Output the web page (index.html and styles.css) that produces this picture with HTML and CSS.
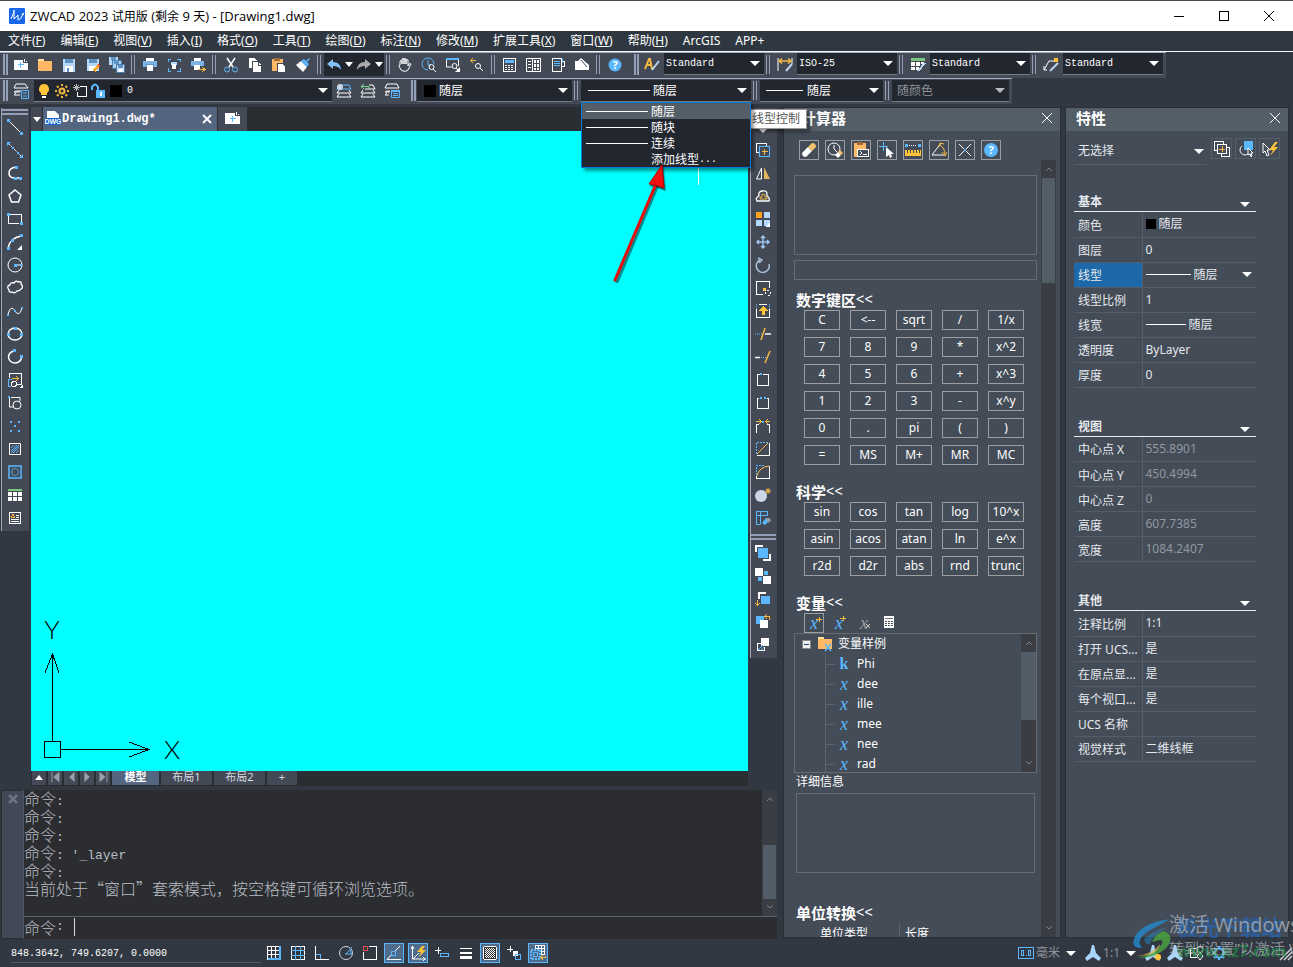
FILE: index.html
```html
<!DOCTYPE html>
<html lang="zh-CN">
<head>
<meta charset="utf-8">
<title>ZWCAD 2023</title>
<link rel="stylesheet" href="styles.css">
</head>
<body>
<div class="app">
<header class="titlebar">
  <svg class="logo" viewBox="0 0 16 16"><rect width="16" height="16" rx="1" fill="#1767e8"/><path d="M2 11 5 4v7l4-4v5q3 0 5-6" stroke="#fff" fill="none"/><circle cx="5" cy="3" r="1" fill="#fff"/><circle cx="14" cy="6" r="1" fill="#fff"/></svg>
  <h1>ZWCAD 2023 <span>试用版</span> (<span>剩余</span> 9 <span>天</span>) - [Drawing1.dwg]</h1>
  <button aria-label="最小化"><svg class="i k" viewBox="0 0 16 16"><path d="M3 8.500h10"/></svg></button>
  <button aria-label="最大化"><svg class="i k" viewBox="0 0 16 16"><path d="M3.500 3.500h9v9h-9z"/></svg></button>
  <button aria-label="关闭"><svg class="i k s" viewBox="0 0 16 16"><path d="M3 3l10 10M13 3 3 13"/></svg></button>
</header>
<nav class="menubar">
  <button>文件(<u>F</u>)</button><button>编辑(<u>E</u>)</button><button>视图(<u>V</u>)</button><button>插入(<u>I</u>)</button><button>格式(<u>O</u>)</button><button>工具(<u>T</u>)</button><button>绘图(<u>D</u>)</button><button>标注(<u>N</u>)</button><button>修改(<u>M</u>)</button><button>扩展工具(<u>X</u>)</button><button>窗口(<u>W</u>)</button><button>帮助(<u>H</u>)</button><button>ArcGIS</button><button>APP+</button>
</nav>

<div class="toolrow">
  <div class="bar">
    <span class="grip"></span>
    <button class="t" aria-label="新建"><svg class="i" viewBox="0 0 16 16"><path class="F" d="M1 3h9v3h5v7H1zM11 2h1v3h-1zM13 4h1v1h-1z"/><path class="b" d="M7.500 5v6M5 7.500h6"/></svg></button>
    <button class="t" aria-label="打开"><svg class="i" viewBox="0 0 16 16"><path fill="#ffe0a0" stroke="none" d="M1 2h6v3H1z"/><path fill="#ffb866" stroke="none" d="M1 4h14v10H1z"/></svg></button>
    <button class="t" aria-label="保存"><svg class="i" viewBox="0 0 16 16"><path class="L" d="M2 2h12v13H2z"/><path class="D" d="M4 2h8v4H4z"/><path class="F" d="M4 9h8v6H4z"/><path class="D" d="M6 11h2v4H6z"/></svg></button>
    <button class="t" aria-label="另存为"><svg class="i" viewBox="0 0 16 16"><path class="L" d="M2 2h12v12H2z"/><path class="D" d="M4 2h8v4H4z"/><path class="F" d="M4 9h8v5H4z"/><path stroke="#ffa82e" stroke-width="3" d="m9 14 5-6"/><path stroke="#e84b3c" stroke-width="2" d="m13 8 2 1"/></svg></button>
    <button class="t" aria-label="全部保存"><svg class="i" viewBox="0 0 16 16"><path class="L" d="M0 0h9v8H0z"/><path class="D" d="M2 0h5v3H2z"/><path fill="#a7d1f5" stroke="#4c7da9" d="M3.500 3.500h9v8h-9z"/><path class="D" d="M5 3h5v4H5z"/><path fill="#c6e4ff" stroke="#4c7da9" d="M7.500 7.500h8v8h-8z"/><path class="D" d="M9 8h5v3H9z"/><path class="F" d="M10 12h4v3h-4z"/></svg></button>
    <span class="sep"></span>
    <button class="t" aria-label="打印"><svg class="i" viewBox="0 0 16 16"><path class="F" d="M4 1h8v3H4z"/><path fill="#7db4e8" stroke="none" d="M1 4h14v6H1z"/><path class="D" d="M4 7h8v2H4z"/><path class="F" d="M5 8h6v6H5z"/></svg></button>
    <button class="t" aria-label="打印预览"><svg class="i" viewBox="0 0 16 16"><path class="b" d="M2 5V2h3M11 2h3v3M14 11v3h-3M5 14H2v-3"/><path class="L" d="M5 5h6v3H5z"/><path class="F" d="M6 7h4v5H6z"/></svg></button>
    <button class="t" aria-label="发布"><svg class="i" viewBox="0 0 16 16"><path class="F" d="M4 1h7v3H4z"/><path fill="#7db4e8" stroke="none" d="M1 4h13v5H1z"/><path class="F" d="M4 8h6v5H4z"/><path class="o" d="M8 12.500h7M12 10l3 2.500-3 2.500"/></svg></button>
    <span class="sep"></span>
    <button class="t" aria-label="剪切"><svg class="i s" viewBox="0 0 16 16"><path d="m4 1 6 9M12 1 6 10" stroke-width="1.500"/><circle class="b" cx="4" cy="12.500" r="2.500"/><circle class="b" cx="12" cy="12.500" r="2.500"/></svg></button>
    <button class="t" aria-label="复制"><svg class="i" viewBox="0 0 16 16"><path class="F" d="M2 1h5l3 3v7H2z"/><path fill="#fff" stroke="#434a56" d="M5.500 4.500h6l3 3v8h-9z"/><path stroke="#434a56" d="M11.500 5v3H15"/></svg></button>
    <button class="t" aria-label="粘贴"><svg class="i" viewBox="0 0 16 16"><path fill="#ffb866" stroke="none" d="M1 2h11v12H1z"/><path fill="#a46a35" stroke="none" d="M3 1h6v3H3z"/><path fill="#fff" stroke="#434a56" d="M6.500 6.500h5l3 3v6h-8z"/></svg></button>
    <button class="t" aria-label="特性匹配"><svg class="i s" viewBox="0 0 16 16"><path class="F" d="m1 8 5-4 6 6-4 5z"/><path class="B" d="m6 4 3-2 5 5-2 3zM11 4l3-3 1 1-3 3z"/></svg></button>
    <span class="sep"></span>
    <div class="undo">
      <button class="t" aria-label="放弃"><svg class="i s" viewBox="0 0 16 16"><path fill="#84bff5" stroke="none" d="M1 7l6-5v3c5 0 8 3 8 8-2-3-4-4-8-4v3z"/></svg></button><span class="tri"></span>
      <button class="t" aria-label="重做"><svg class="i s" viewBox="0 0 16 16"><path fill="#aaa" stroke="none" d="M15 7 9 2v3c-5 0-8 3-8 8 2-3 4-4 8-4v3z"/></svg></button><span class="tri"></span>
    </div>
    <span class="sep"></span>
    <button class="t" aria-label="平移"><svg class="i s" viewBox="0 0 16 16"><path d="M3 8V4q1-1 2 0v3-5q1-1 2 0v5-5q1-1 2 0v5-4q1-1 2 0v6l1-2q2-1 2 0l-3 6q-2 2-5 1-2 0-3-3L2 9q0-1 1-1"/></svg></button>
    <button class="t" aria-label="实时缩放"><svg class="i s" viewBox="0 0 16 16"><path class="b" d="M7 13a6 6 0 1 1 6-6M7 3v5h3"/><circle cx="10.500" cy="10" r="2.500"/><path d="m12 12 3 3"/></svg></button>
    <button class="t" aria-label="窗口缩放"><svg class="i s" viewBox="0 0 16 16"><path class="b" stroke-width="2" d="M1 2h13"/><path d="M1.500 3v7h5M13.500 3v6"/><circle cx="9.500" cy="9" r="2.500"/><path d="m11 11 2 2"/><path class="F" d="m15 10v5h-5z"/></svg></button>
    <button class="t" aria-label="上一个"><svg class="i s" viewBox="0 0 16 16"><path class="o" d="M2 3.500h5M4 1 1.500 3.500 4 6"/><circle cx="9" cy="9" r="2.500"/><path d="m11 11 3 3"/></svg></button>
    <span class="sep"></span>
    <button class="t" aria-label="特性"><svg class="i" viewBox="0 0 16 16"><path d="M1.500 1.500h12v13h-12z"/><path class="B" d="M3 3h9v3H3z"/><path stroke-dasharray="2 1" d="M3 8.500h9M3 10.500h9M3 12.500h9"/></svg></button>
    <button class="t" aria-label="设计中心"><svg class="i" viewBox="0 0 16 16"><path d="M.5 1.500h14v13H.5zM6.500 2v12"/><path d="M2 4.500h3M2 7.500h3M2 10.500h3"/><path d="M8.500 3.500h1v2h-1zM11.500 3.500h1v2h-1zM8.500 7.500h1v2h-1zM11.500 7.500h1v2h-1zM8.500 11.500h1v1h-1zM11.500 11.500h1v1h-1z"/></svg></button>
    <button class="t" aria-label="工具选项板"><svg class="i" viewBox="0 0 16 16"><path d="M2.500 1.500h9v13h-9zM12 4.500h2v5h-2"/><path class="b" d="M4 4.500h6M4 6.500h6M4 8.500h6M12 2v4"/></svg></button>
    <button class="t" aria-label="图纸集"><svg class="i s" viewBox="0 0 16 16"><path class="F" d="M1 4h3l3-3 8 7v5H1z"/><path stroke="#434a56" d="m7 3 6 7"/></svg></button>
    <span class="sep"></span>
    <button class="t" aria-label="帮助"><svg class="i s" viewBox="0 0 16 16"><circle cx="8" cy="8" r="6.500" class="B"/><text x="8" y="12" class="q">?</text></svg></button>
  </div>
  <div class="bar second">
    <span class="grip"></span>
    <button class="t" aria-label="文字样式"><svg class="i s" viewBox="0 0 16 16"><path class="o" stroke-width="2" d="M1 12 5 2h1l2 10M3 8h5"/><path stroke="#b9d3ee" stroke-width="2" d="m8 13 7-9"/></svg></button>
    <div class="combo styl"><select class="mono" aria-label="文字样式"><option>Standard</option></select></div>
    <span class="sep"></span>
    <button class="t" aria-label="标注样式"><svg class="i s" viewBox="0 0 16 16"><path d="M1 1v13M15 1v6"/><path class="o" stroke-width="1.500" d="M2 4h12M5 1.500 2 4l3 2.500M11 1.500 14 4l-3 2.500"/><path stroke="#b9d3ee" stroke-width="2" d="m9 14 6-7"/></svg></button>
    <div class="combo styl"><select class="mono" aria-label="标注样式"><option>ISO-25</option></select></div>
    <span class="sep"></span>
    <button class="t" aria-label="表格样式"><svg class="i" viewBox="0 0 16 16"><path class="G" d="M1 1h14v3H1z"/><path class="F" d="M1 5h4v4H1zM6 5h4v4H6zM11 5h3v2h-3zM1 10h4v3H1zM6 10h3v3H6z"/><path stroke="#b9d3ee" stroke-width="2" d="m8 14 7-8"/></svg></button>
    <div class="combo styl"><select class="mono" aria-label="表格样式"><option>Standard</option></select></div>
    <span class="sep"></span>
    <button class="t" aria-label="引线样式"><svg class="i s" viewBox="0 0 16 16"><path d="m1 13 5-9h6M1 9v4h3"/><path class="O" d="M11 1h4v4h-4z"/><path stroke="#b9d3ee" stroke-width="2" d="m7 14 8-8"/></svg></button>
    <div class="combo styl"><select class="mono" aria-label="引线样式"><option>Standard</option></select></div>
  </div>
</div>

<div class="toolrow lower">
  <div class="bar">
    <span class="grip"></span>
    <button class="t" aria-label="图层特性"><svg class="i s" viewBox="0 0 16 16"><path d="m1 5 2-4h9l3 4zM8 8H3L1 9h6M7 12H1l2-2"/><path fill="#434a56" class="b" d="M8.500 7.500h7v8h-7zM10 10h4M10 13h4"/></svg></button>
    <div class="combo layer">
      <svg class="i s" viewBox="0 0 16 16"><path class="O" d="M8 1a5 5 0 0 1 3 9v2H5v-2a5 5 0 0 1 3-9z"/><path stroke-width="2" d="M6 14h4"/></svg>
      <svg class="i s" viewBox="0 0 16 16"><circle class="o" cx="8" cy="8" r="2.500" stroke-width="2"/><path class="o" stroke-width="2" d="M8 1v2M8 13v2M1 8h2M13 8h2M3 3l1.500 1.500M11.500 11.500 13 13M13 3l-1.500 1.500M4.500 11.500 3 13"/></svg>
      <svg class="i" viewBox="0 0 16 16"><path d="M8 3.500h6v10H5.500V9"/><path stroke="#bbb" d="M4.500 1v7M1 4.500h7M2 2l5 5M7 2 2 7"/></svg>
      <svg class="i s" viewBox="0 0 16 16"><path class="b" stroke-width="2" d="M2 7V4q3-5 6 0v3"/><path class="B" d="M6 7h9v8H6z"/><path class="F" d="M10 9h2v4h-2z"/></svg>
      <span class="swatch"></span>
      <select class="mono" aria-label="图层"><option>0</option></select>
    </div>
    <button class="t" aria-label="置为当前"><svg class="i s" viewBox="0 0 16 16"><path class="b" d="m1 6 2-4h10l2 4z"/><circle cx="4" cy="4" r="3" fill="#cdd8e6" stroke="none"/><path d="m3 7-2 3h14l-2-3M3 11l-2 3h14l-2-3"/></svg></button>
    <button class="t" aria-label="上一图层"><svg class="i s" viewBox="0 0 16 16"><path d="M9 2h4l2 4H5"/><path stroke="#7bdc8c" d="M1 3.500h8V6M4 1 1 3.500 4 6"/><path d="m3 7-2 3h14l-2-3M3 11l-2 3h14l-2-3"/></svg></button>
    <button class="t" aria-label="图层状态"><svg class="i s" viewBox="0 0 16 16"><path d="m1 5 2-4h10l2 4zM6 8H3L1 9h5M5 12H1l2-2"/><path class="b" fill="#434a56" d="M7.500 7.500h8v7h-8z"/><path class="b" stroke-width="2" d="M7 8h9"/><path class="b" d="M9 10.500h5M9 12.500h5"/></svg></button>
  </div>
  <div class="bar second">
    <span class="grip"></span>
    <div class="combo color"><span class="swatch"></span><select aria-label="颜色"><option>随层</option></select></div>
    <span class="sep"></span>
    <div class="combo ltype"><span class="line long"></span><select aria-label="线型"><option>随层</option></select>
      <ul class="droplist">
        <li class="on"><span class="line long"></span>随层</li>
        <li><span class="line long"></span>随块</li>
        <li><span class="line long"></span>连续</li>
        <li><span class="line none"></span>添加线型<span class="mono">...</span></li>
      </ul>
      <div class="tooltip">线型控制</div>
    </div>
    <span class="sep"></span>
    <div class="combo lweight"><span class="line short"></span><select aria-label="线宽"><option>随层</option></select></div>
    <span class="sep"></span>
    <div class="combo pstyle"><select aria-label="打印样式" disabled><option>随颜色</option></select></div>
  </div>
</div>

<main class="work">
  <div class="left">
    <div class="drawrow">
      <aside class="palette">
        <span class="hgrip"></span>
        <button aria-label="直线"><svg class="i s" viewBox="0 0 16 16"><path d="m2 2 12 12"/><path class="B" d="M0 0h3v3H0zM13 13h3v3h-3z"/></svg></button>
        <button aria-label="构造线"><svg class="i s" viewBox="0 0 16 16"><path d="m1 1 14 14" stroke-dasharray="3 1"/><path class="B" d="M0 0h4L0 4zM16 16h-4l4-4zM5 5h2v2H5zM10 10h2v2h-2z"/></svg></button>
        <button aria-label="多段线"><svg class="i s" viewBox="0 0 16 16"><path stroke-width="1.500" d="M9 2Q2 3 2 8q0 5 6 5h5"/><path class="B" d="M8 1h3v3H8zM12 12h3v3h-3zM7 12h3v3H7z"/></svg></button>
        <button aria-label="多边形"><svg class="i s" viewBox="0 0 16 16"><path stroke-width="1.500" d="m8 2 6 5-2.500 7h-7L2 7z"/></svg></button>
        <button aria-label="矩形"><svg class="i" viewBox="0 0 16 16"><path d="M3 3.500h11.500V11M12 12.500H1.500V5"/><path class="B" d="M0 2h3v3H0zM13 11h3v3h-3z"/></svg></button>
        <button aria-label="圆弧"><svg class="i s" viewBox="0 0 16 16"><path stroke-width="1.500" d="M1 14Q3 4 14 2"/><path class="B" d="M0 13h3v3H0zM4 5h3v3H4zM13 0h3v3h-3z"/><path class="F" d="M15 11v5h-5z"/></svg></button>
        <button aria-label="圆"><svg class="i s" viewBox="0 0 16 16"><circle cx="8" cy="8" r="7"/><path d="M8 8h6"/><path class="B" d="M7 7h3v3H7zM13 7h2v2h-2z"/></svg></button>
        <button aria-label="修订云线"><svg class="i s" viewBox="0 0 16 16"><path stroke-width="1.300" d="M2 10Q-1 6 3 5q0-3 4-2 2-3 4-1 4-1 3 2 3 3 0 5-1 2-4 2-2 3-5 1-3 1-3-2z"/></svg></button>
        <button aria-label="样条曲线"><svg class="i s" viewBox="0 0 16 16"><path d="M1 11Q4 1 8 8t7-3"/><path class="B" d="M0 11h2v2H0zM7 7h2v2H7zM14 4h2v2h-2z"/></svg></button>
        <button aria-label="椭圆"><svg class="i s" viewBox="0 0 16 16"><ellipse cx="8" cy="8" rx="7" ry="6" stroke-width="1.400"/><path class="B" d="M7 1h3v3H7zM0 7h3v3H0zM13 7h3v3h-3z"/></svg></button>
        <button aria-label="椭圆弧"><svg class="i s" viewBox="0 0 16 16"><path stroke-width="1.500" d="M7 2a6.500 6 0 1 0 7.500 6"/><path class="B" d="M6 0h3v3H6zM13 6h3v3h-3z"/></svg></button>
        <button aria-label="插入块"><svg class="i" viewBox="0 0 16 16"><path d="M2.500 6V1.500h12v11H10"/><path class="b" d="M5 7.500H1.500v7H4"/><path class="o" d="M5 6.500h6M9 4l2 2.500L9 9"/><circle cx="7" cy="12" r="2.500"/><path class="F" d="M16 12v4h-4z"/></svg></button>
        <button aria-label="创建块"><svg class="i s" viewBox="0 0 16 16"><path d="M2.500 3v9H6M4 2.500h9V6"/><path class="B" d="M1 1h2v2H1z"/><circle cx="10" cy="10" r="4"/></svg></button>
        <button aria-label="点"><svg class="i" viewBox="0 0 16 16"><path class="B" d="M3 3h2v2H3zM11 3h2v2h-2zM7 7h2v2H7zM3 12h2v2H3zM11 12h2v2h-2z"/></svg></button>
        <button aria-label="图案填充"><svg class="i s" viewBox="0 0 16 16"><path d="M2.500 2.500h11v11h-11z"/><path class="b" d="m4 7 3-3M4 10l6-6M4 12l8-8M6 12l6-6M9 12l3-3"/></svg></button>
        <button aria-label="面域"><svg class="i s" viewBox="0 0 16 16"><path class="b" stroke-width="1.500" d="M2 2h12v12H2z"/><circle cx="8" cy="8" r="3.500" stroke="#5b9fdc"/></svg></button>
        <button aria-label="表格"><svg class="i" viewBox="0 0 16 16"><path class="G" d="M1 2h14v2H1z"/><path class="F" d="M1 5h4v4H1zM6 5h4v4H6zM11 5h4v4h-4zM1 10h4v4H1zM6 10h4v4H6zM11 10h4v4h-4z"/></svg></button>
        <button aria-label="多行文字"><svg class="i" viewBox="0 0 16 16"><path d="M2.500 2.500h11v11h-11z"/><path class="o" d="m4 8 2-4 2 4M5 7h3"/><path d="M9 5.500h3M9 7.500h3M4 9.500h8M4 11.500h8"/></svg></button>
      </aside>
      <section class="doc">
        <div class="filetabs">
          <button class="more" aria-label="文件列表"><span class="tri"></span></button>
          <div class="ftab">
            <svg class="i s" viewBox="0 0 16 16"><path class="F" d="M2 0h8l4 4v8H2z"/><path fill="#1267d8" stroke="none" d="M0 7h16v7H0z"/><text x="8" y="13" class="dwg">DWG</text></svg>
            <span class="fname">Drawing1.dwg*</span>
            <button aria-label="关闭"><svg class="i s" viewBox="0 0 16 16"><path stroke-width="2" d="m4 4 8 8M12 4l-8 8"/></svg></button>
          </div>
          <button class="newtab" aria-label="新建"><svg class="i" viewBox="0 0 16 16"><path class="F" d="M0 2h10v3h5v8H0zM11 1h1v3h-1zM13 3h1v1h-1z"/><path class="b" d="M7.500 5v6M5 7.500h6"/></svg></button>
        </div>
        <div class="canvas">
          <svg class="ucs" viewBox="0 0 160 160"><path d="M13.500 130.500h16v16h-16zM21.500 130V43M14 62l7.500-19L28 62M30 138.500h88M98 131l20 7.500-20 7.500"/><text x="21" y="28">Y</text><text x="141" y="148">X</text></svg>
          <svg class="pointer" viewBox="0 0 80 130"><path d="m15 119 40-95" stroke="#000" stroke-opacity=".45" stroke-width="4" stroke-linecap="round"/><path d="m61 5-12 19 6 1 8 3z" fill="#000" fill-opacity=".45" stroke="#000" stroke-opacity=".3" stroke-width="2"/><path d="m13 118 41-96" stroke="#e80c0c" stroke-width="3" stroke-linecap="round"/><path d="m60 3-13 19 6 1 9 3z" fill="#f01010" stroke="#b00" stroke-width="1"/></svg>
          <span class="caret"></span>
        </div>
        <div class="sheets">
          <button aria-label="列表"><span class="up"></span></button>
          <button aria-label="首个"><svg class="i n s" viewBox="0 0 16 16"><path d="M4.500 2v12" /><path d="m13 2-7 6 7 6z"/></svg></button>
          <button aria-label="上一个"><svg class="i n s" viewBox="0 0 16 16"><path d="m12 2-6 6 6 6z"/></svg></button>
          <button aria-label="下一个"><svg class="i n s" viewBox="0 0 16 16"><path d="m5 2 6 6-6 6z"/></svg></button>
          <button aria-label="末个"><svg class="i n s" viewBox="0 0 16 16"><path d="M12.500 2v12"/><path d="m4 2 7 6-7 6z"/></svg></button>
          <button class="sheet on">模型</button><button class="sheet">布局1</button><button class="sheet">布局2</button><button class="sheet add">+</button>
        </div>
      </section>
      <aside class="palette right">
        <span class="hgrip"></span>
        <button aria-label="删除"><svg class="i s" viewBox="0 0 16 16"><path class="F" d="m3 9 6-6 5 5-6 6z"/></svg></button>
        <button aria-label="复制对象"><svg class="i" viewBox="0 0 16 16"><path d="M4 10.500H1.500v-9h10V4"/><path class="b" d="M4.500 4.500h10v10h-10z"/><path class="o" d="M7 9.500h6M9.500 7v6"/></svg></button>
        <button aria-label="镜像"><svg class="i s" viewBox="0 0 16 16"><path d="M6.500 3v11h-5z"/><path fill="#e3b45c" stroke="none" d="M9 2v12h6z"/></svg></button>
        <button aria-label="偏移"><svg class="i s" viewBox="0 0 16 16"><path stroke-width="1.300" d="M2 13q-2-3 2-5-1-4 3-5 5-1 5 3v2q3 1 2 5z"/><path class="o" d="M5 11q-1-2 2-2-1-3 1-3 3 0 2 3 3 0 2 2z"/></svg></button>
        <button aria-label="阵列"><svg class="i" viewBox="0 0 16 16"><path fill="#ffa31a" stroke="none" d="M1 1h6v6H1z"/><path class="L" d="M9 1h6v6H9zM1 9h6v6H1zM9 9h6v6H9z"/><path class="F" d="M15 11v5h-5z"/></svg></button>
        <button aria-label="移动"><svg class="i s" viewBox="0 0 16 16"><path stroke="#9cc4ee" stroke-width="1.500" d="M8 2v12M2 8h12M6 4l2-2 2 2M6 12l2 2 2-2M4 6 2 8l2 2M12 6l2 2-2 2"/></svg></button>
        <button aria-label="旋转"><svg class="i s" viewBox="0 0 16 16"><path stroke="#a9c0da" stroke-width="1.500" d="M5 3a6.500 6.500 0 1 0 9 4M3 1l4 2-3 3"/></svg></button>
        <button aria-label="缩放"><svg class="i" viewBox="0 0 16 16"><path d="M8 14.500H1.500v-13h13V8"/><path class="O" d="M8 8h3v3H8z"/><path d="M10 14v-4h4M15 12v3h-3" stroke-dasharray="2 1"/></svg></button>
        <button aria-label="拉伸"><svg class="i" viewBox="0 0 16 16"><path d="M1.500 6v8.500h13V6M4 1.500h8"/><path class="b" stroke-dasharray="1 1" d="M1.500 1v5M14.500 1v5"/><path class="O" d="M8 3 4 8h3v4h3V8h3z"/></svg></button>
        <button aria-label="修剪"><svg class="i s" viewBox="0 0 16 16"><path stroke-width="1.500" d="M10 8h6"/><path class="b" stroke-dasharray="1 1" d="M0 8h8"/><path class="o" stroke-width="1.500" d="m6 14 4-12"/></svg></button>
        <button aria-label="延伸"><svg class="i s" viewBox="0 0 16 16"><path stroke-width="1.500" d="M0 8.500h5"/><path class="b" stroke-dasharray="1 1" d="M6 8.500h5"/><path class="o" stroke-width="1.500" d="m10 14 5-12"/></svg></button>
        <button aria-label="打断于点"><svg class="i" viewBox="0 0 16 16"><path d="M5 2.500H2.500v11h11v-11H8"/><path class="B" d="M5 1h2v2H5z"/></svg></button>
        <button aria-label="打断"><svg class="i" viewBox="0 0 16 16"><path d="M4 3.500H2.500v10h11v-10H12"/><path class="B" d="M5 2h2v2H5zM9 2h2v2H9z"/></svg></button>
        <button aria-label="合并"><svg class="i" viewBox="0 0 16 16"><path d="M1.500 15V6H4M14.500 15V6H12"/><path class="o" d="M1 3.500h5M4 1l2 2.500L4 6M15 3.500h-4M13 1l-2 2.500L13 6"/><path class="B" d="M7 3h2v2H7z"/></svg></button>
        <button aria-label="倒角"><svg class="i" viewBox="0 0 16 16"><path d="M14.500 2v12.500H1.500"/><path class="b" stroke-dasharray="2 1" d="M1.500 13V1.500H14"/><path class="o s" d="M2 13 13 2"/></svg></button>
        <button aria-label="圆角"><svg class="i" viewBox="0 0 16 16"><path d="M14.500 2v12.500H1.500V12"/><path class="b" stroke-dasharray="2 1" d="M1.500 11V1.500H10"/><path class="o s" d="M2 12Q4 3 14 2"/></svg></button>
        <button aria-label="分解"><svg class="i s" viewBox="0 0 16 16"><circle cx="6" cy="9" r="6" fill="#cbd6e6" stroke="none"/><path class="o" d="M13 1v6M10 4h6M11 2l4 4M15 2l-4 4"/></svg></button>
        <button aria-label="编辑块"><svg class="i s" viewBox="0 0 16 16"><path class="b" d="M1.500 1.500h11v4h-11zM1.500 6v8.500h4M5.500 1v13"/><path class="B" d="m7 13 4-5 3 3-4 4z"/><path fill="#999" stroke="none" d="m11 8 4 0 1 3-3 2z"/></svg></button>
        <span class="hgrip inner"></span>
        <button aria-label="前置"><svg class="i" viewBox="0 0 16 16"><path stroke-width="2" d="M1 7V1h7M15 9v6H8"/><path class="B" d="M3 3h10v10H3z"/></svg></button>
        <button aria-label="后置"><svg class="i" viewBox="0 0 16 16"><path class="F" d="M0 0h8v8H0zM8 8h8v8H8z"/><path class="B" d="M9 3h4v4H9zM3 9h4v4H3z"/></svg></button>
        <button aria-label="置于对象之上"><svg class="i" viewBox="0 0 16 16"><path stroke-width="2" d="M4 8V2h7"/><path class="B" d="M6 5h9v8H6z"/><path class="o" d="M2.500 9v5M0 12l2.500 2.500L5 12"/></svg></button>
        <button aria-label="置于对象之下"><svg class="i" viewBox="0 0 16 16"><path class="B" d="M1 2h8v8H1z"/><path class="F" d="M5 6h8v8H5z"/><path class="o" d="M11 2.500h3V6M12 0l-2 2.500L12 5"/></svg></button>
        <button aria-label="填充后置"><svg class="i" viewBox="0 0 16 16"><path class="F" d="M6 1h8v8H6z"/><path d="M6 6.500H2.500v7h7V10"/><path class="b" d="m3 13 5-5M6 13l3-3"/></svg></button>
      </aside>
    </div>
    <section class="command">
      <div class="cside"><svg class="i s" viewBox="0 0 16 16"><path stroke="#6b7280" stroke-width="2.500" d="m4 4 8 8M12 4l-8 8"/></svg></div>
      <div class="cmain">
        <div class="log">
          <div class="lines"><p>命令<i>:</i></p><p>命令<i>:</i></p><p>命令<i>:</i></p><p>命令<i>: '_layer</i></p><p>命令<i>:</i></p><p>当前处于“窗口”套索模式，按空格键可循环浏览选项。</p></div>
          <div class="scroll"><svg class="i c" viewBox="0 0 16 16"><path d="m5 9 3-3 3 3"/></svg><span class="thumb low"></span><svg class="i c" viewBox="0 0 16 16"><path d="m5 6 3 3 3-3"/></svg></div>
        </div>
        <label class="prompt">命令<i>:</i><span class="cur"></span><input type="text" aria-label="命令"></label>
      </div>
    </section>
  </div>

  <section class="panel calc">
    <header><h2>计算器</h2><button aria-label="关闭"><svg class="i s" viewBox="0 0 16 16"><path d="m3 3 10 10M13 3 3 13"/></svg></button></header>
    <div class="cbody">
      <div class="cscroll">
        <div class="ctools">
          <button aria-label="清除"><svg class="i s" viewBox="0 0 16 16"><path class="F" d="m1 11 6-6 4 4-6 6q-4 0-4-4z"/><path fill="#f4c26a" stroke="none" d="m7 5 4-4q4 0 4 4l-4 4z"/></svg></button>
          <button aria-label="清除历史"><svg class="i s" viewBox="0 0 16 16"><circle cx="7" cy="7" r="6"/><path d="M7 3v4l3 3"/><path class="F" d="m8 13 3-3 3 3-3 3z"/><path fill="#f4c26a" stroke="none" d="m11 10 2-2 3 3-2 2z"/></svg></button>
          <button aria-label="粘贴到命令行"><svg class="i" viewBox="0 0 16 16"><path fill="#ffb866" stroke="none" d="M1 1h12v14H1z"/><path fill="#a46a35" stroke="none" d="M4 0h6v3H4z"/><path fill="#434c57" d="M4.500 7.500h11v7h-11zM7 9l2 2-2 2M10 12.500h4"/></svg></button>
          <button aria-label="获取坐标"><svg class="i s" viewBox="0 0 16 16"><path class="b" d="M4.500 0v9M0 4.500h9"/><path class="F" d="m7 5 8 7h-3l1 3-2 1-1-3-3 2z"/></svg></button>
          <button aria-label="距离"><svg class="i" viewBox="0 0 16 16"><path class="B" d="M0 2h3v3H0zM13 2h3v3h-3z"/><path stroke-dasharray="1 1" d="M4 3.500h8"/><path class="O" d="M0 8h16v6H0z"/><path stroke="#434c57" d="M2.500 8v3M5.500 8v3M8.500 8v3M11.500 8v3M14.500 8v3"/></svg></button>
          <button aria-label="角度"><svg class="i s" viewBox="0 0 16 16"><path d="M10 1 1 13h12"/><path class="o" d="M9 3q5 3 5 10M8 5l1-4 4 1M11 10l3 4 2-4"/></svg></button>
          <button aria-label="交点"><svg class="i s" viewBox="0 0 16 16"><path d="m2 2 12 12M14 2 2 14"/><path class="B" d="M7 7h2v2H7z"/></svg></button>
          <button aria-label="帮助"><svg class="i s" viewBox="0 0 16 16"><circle cx="8" cy="8" r="7" class="B"/><text x="8" y="12" class="q">?</text></svg></button>
        </div>
        <div class="box history"></div>
        <input class="box entry" type="text" aria-label="表达式">
        <h3>数字键区<span>&lt;&lt;</span></h3>
        <div class="keys"><button>C</button><button>&lt;--</button><button>sqrt</button><button>/</button><button>1/x</button><button>7</button><button>8</button><button>9</button><button>*</button><button>x^2</button><button>4</button><button>5</button><button>6</button><button>+</button><button>x^3</button><button>1</button><button>2</button><button>3</button><button>-</button><button>x^y</button><button>0</button><button>.</button><button>pi</button><button>(</button><button>)</button><button>=</button><button>MS</button><button>M+</button><button>MR</button><button>MC</button></div>
        <h3 class="gap">科学<span>&lt;&lt;</span></h3>
        <div class="keys"><button>sin</button><button>cos</button><button>tan</button><button>log</button><button>10^x</button><button>asin</button><button>acos</button><button>atan</button><button>ln</button><button>e^x</button><button>r2d</button><button>d2r</button><button>abs</button><button>rnd</button><button>trunc</button></div>
        <h3 class="gap">变量<span>&lt;&lt;</span></h3>
        <div class="vtools">
          <button class="framed" aria-label="新建变量"><span class="var">x</span><svg class="i" viewBox="0 0 16 16"><path class="o" d="M9 4.500h6M12 2v5"/></svg></button>
          <button aria-label="编辑变量"><span class="var">x</span><svg class="i" viewBox="0 0 16 16"><path class="o" d="M9 4.500h6M12 2v5"/></svg></button>
          <button aria-label="删除变量"><span class="var off">x</span><svg class="i s" viewBox="0 0 16 16"><path stroke="#ccc" d="m10 10 4 4M14 10l-4 4"/></svg></button>
          <button aria-label="返回变量"><svg class="i" viewBox="0 0 16 16"><path class="F" d="M3 2h10v12H3z"/><path stroke="#434c57" stroke-dasharray="2 1" d="M4 7.500h8M4 9.500h8M4 11.500h8"/><path stroke="#777" d="M4 4.500h8"/></svg></button>
        </div>
        <div class="tree">
          <ul>
            <li class="root"><svg class="minus" viewBox="0 0 9 9"><path fill="#eee" stroke="#888" d="M.5.5h8v8h-8z"/><path stroke="#246" d="M2 4.500h5"/></svg><svg class="i" viewBox="0 0 16 16"><path fill="#ffe0a0" stroke="none" d="M1 1h6v3H1z"/><path fill="#ffb866" stroke="none" d="M1 3h14v10H1z"/><path class="b s" stroke-width="1.500" d="m8 8 6 7M14 8l-6 7"/></svg>变量样例</li>
            <li><b class="var con">k</b>Phi</li><li><span class="var">x</span>dee</li><li><span class="var">x</span>ille</li><li><span class="var">x</span>mee</li><li><span class="var">x</span>nee</li><li><span class="var">x</span>rad</li>
          </ul>
          <div class="scroll"><svg class="i c" viewBox="0 0 16 16"><path d="m5 9 3-3 3 3"/></svg><span class="thumb tr"></span><svg class="i c" viewBox="0 0 16 16"><path d="m5 6 3 3 3-3"/></svg></div>
        </div>
        <p class="detail">详细信息</p>
        <div class="box dbox"></div>
        <h3 class="units">单位转换<span>&lt;&lt;</span></h3>
        <div class="urow"><span>单位类型</span><span>长度</span></div>
      </div>
      <div class="scroll"><svg class="i c" viewBox="0 0 16 16"><path d="m5 9 3-3 3 3"/></svg><span class="thumb main"></span><svg class="i c" viewBox="0 0 16 16"><path d="m5 6 3 3 3-3"/></svg></div>
    </div>
  </section>

  <section class="panel props">
    <header><h2>特性</h2><button aria-label="关闭"><svg class="i s" viewBox="0 0 16 16"><path d="m3 3 10 10M13 3 3 13"/></svg></button></header>
    <div class="picker">
      <div class="sel"><select aria-label="选择"><option>无选择</option></select><span class="tri big"></span></div>
      <button aria-label="切换加选"><svg class="i" viewBox="0 0 16 16"><path d="M3 9.500H.5v-9h9V3M13 6h2.500v9H7V13"/><path d="M3.500 3.500h9v9h-9z"/><path class="o" d="M5 8h6M8 5v6"/></svg></button>
      <button aria-label="选择对象"><svg class="i s" viewBox="0 0 16 16"><path class="B" d="M6 0h9v9H6z"/><path d="M4 5a5 5 0 1 0 7 7"/><path fill="#434c57" d="m10 7 5 5h-2l1 3-1 1-1-3-2 1z"/></svg></button>
      <button aria-label="快速选择"><svg class="i s" viewBox="0 0 16 16"><path d="m1 2 7 7H5l2 5-2 1-2-5-2 2z"/><path class="O" d="m13 1-6 8h4l-3 6 8-9h-4l4-5z"/></svg></button>
    </div>
    <h3 class="first">基本<span class="tri big"></span></h3>
    <table>
      <tr><th>颜色</th><td><span class="cell"><span class="swatch small"></span>随层</span></td></tr>
      <tr><th>图层</th><td>0</td></tr>
      <tr class="on"><th>线型</th><td><span class="cell"><span class="line mid"></span>随层<span class="tri big"></span></span></td></tr>
      <tr><th>线型比例</th><td>1</td></tr>
      <tr><th>线宽</th><td><span class="cell"><span class="line small"></span>随层</span></td></tr>
      <tr><th>透明度</th><td>ByLayer</td></tr>
      <tr><th>厚度</th><td>0</td></tr>
    </table>
    <h3>视图<span class="tri big"></span></h3>
    <table class="dim">
      <tr><th>中心点 X</th><td>555.8901</td></tr><tr><th>中心点 Y</th><td>450.4994</td></tr><tr><th>中心点 Z</th><td>0</td></tr><tr><th>高度</th><td>607.7385</td></tr><tr><th>宽度</th><td>1084.2407</td></tr>
    </table>
    <h3>其他<span class="tri big"></span></h3>
    <table>
      <tr><th>注释比例</th><td>1:1</td></tr><tr><th>打开 UCS...</th><td>是</td></tr><tr><th>在原点显...</th><td>是</td></tr><tr><th>每个视口...</th><td>是</td></tr><tr><th>UCS 名称</th><td></td></tr><tr><th>视觉样式</th><td>二维线框</td></tr>
    </table>
  </section>
</main>

<footer class="status">
  <div class="coords mono">848.3642, 749.6207, 0.0000</div>
  <div class="modes">
    <button aria-label="捕捉"><svg class="i" viewBox="0 0 16 16"><path d="M1.500 1.500h13v13h-13zM5.500 1v13M9.500 1v13M1 5.500h13M1 9.500h13"/><path class="b" stroke-width="2" d="M14 1v13M2 14h13"/></svg></button>
    <button aria-label="栅格"><svg class="i" viewBox="0 0 16 16"><path d="M1.500 1.500h13v13h-13z"/><path class="b" d="M5.500 1v14M10.500 1v14M1 5.500h14M1 10.500h14"/></svg></button>
    <button aria-label="正交"><svg class="i" viewBox="0 0 16 16"><path d="M1.500 1v13.500H15"/><path class="b" d="M2 9.500h4.500V14"/></svg></button>
    <button aria-label="极轴"><svg class="i s" viewBox="0 0 16 16"><circle cx="8" cy="8" r="6.500" stroke="#cfd6df"/><path class="b" d="m8 9 6-7M7 9h8M12 5q1 2 1 4"/></svg></button>
    <button aria-label="对象捕捉"><svg class="i" viewBox="0 0 16 16"><path d="M7 1.500h7.500v13h-13V7"/><path stroke="#f04b4b" d="M1.500 1.500h4v4h-4z"/></svg></button>
    <button class="on" aria-label="对象追踪"><svg class="i s" viewBox="0 0 16 16"><path d="M14 1 1 14.500h14"/><path class="b" fill="#4f6c8c" d="M5.500 6.500h4v4h-4z"/></svg></button>
    <button class="on" aria-label="动态 UCS"><svg class="i s" viewBox="0 0 16 16"><path d="M2.500 1v13H16M1 4l1.500-3L4 4M13 12l2 2-2 2M3 14l6-6"/><path class="O" d="m12 1-5 6h4l-2 5 7-7h-4l3-4z"/></svg></button>
    <button aria-label="动态输入"><svg class="i" viewBox="0 0 16 16"><path d="M1 5.500h6M4.500 2v7"/><path class="b" d="M6.500 8.500h8v3h-8z"/></svg></button>
    <button aria-label="线宽"><svg class="i" viewBox="0 0 16 16"><path d="M2 3.500h12"/><path stroke-width="2" d="M2 8h12"/><path stroke-width="3" d="M2 12.500h12"/></svg></button>
    <button class="on" aria-label="透明度"><svg class="i" viewBox="0 0 16 16"><rect x="1.500" y="1.500" width="13" height="13" rx="2" fill="#333"/><path stroke-dasharray="1 1" d="M3 3.500h10M3 5.500h10M3 7.500h10M3 9.500h10M3 11.500h10"/><path stroke-dasharray="1 1" stroke-dashoffset="1" d="M3 4.500h10M3 6.500h10M3 8.500h10M3 10.500h10M3 12.500h10"/></svg></button>
    <button aria-label="循环选择"><svg class="i" viewBox="0 0 16 16"><path d="M1 4.500h6M4.500 1v6"/><path class="F" d="M7 6h5v5H7z"/><path class="b" d="M9.500 9.500h5v5h-5z"/></svg></button>
    <button class="on" aria-label="块预览"><svg class="i" viewBox="0 0 16 16"><path d="M5.500.5h9v9h-9zM8.500 0v5M11.500 0v9M6 3.500h9M9 6.500h6"/><path fill="#4f6c8c" stroke="none" d="M0 4h10v11H0z"/><path class="b" stroke-width="2" stroke-dasharray="2 1" d="M1 5h9v9H1z"/><path class="b" d="M3.500 7.500h4v4h-4z"/><path class="o" d="M15 10.500v2h-4M13 10l-2 2.500 2 2"/></svg></button>
  </div>
  <div class="rstat">
    <button aria-label="单位"><svg class="i" viewBox="0 0 16 16"><path class="b" d="M.5 2v12M15.500 2v12M0 2.500h16M0 13.500h16M3.500 5.500h2v5h-2zM10.500 5.500h2v5h-2z"/><path class="B" d="M8 10h1v1H8z"/></svg><span>毫米</span></button><span class="tri big"></span>
    <button class="ann" aria-label="注释比例"><svg class="i s" viewBox="0 0 16 16"><path class="A" d="M7 0h2l2 8 5 5-2 3-6-4-6 4-2-3 5-5z"/></svg><span>1:1</span></button><span class="tri big"></span>
    <button class="ann" aria-label="注释可见性"><svg class="i s" viewBox="0 0 16 16"><path class="A" d="M7 0h2l2 8 5 5-2 3-6-4-6 4-2-3 5-5z"/><circle class="O" cx="13" cy="12" r="3"/></svg></button>
    <button aria-label="自动缩放"><svg class="i s" viewBox="0 0 16 16"><path class="A" d="M7 0h2l2 8 5 5-2 3-6-4-6 4-2-3 5-5z"/></svg></button>
    <button aria-label="隔离对象"><svg class="i s" viewBox="0 0 16 16"><path d="M8 3.500H1.500v9H8M1.500 8H7"/><circle cx="11" cy="4.500" r="3"/><path d="m11 8 3 3-3 4-3-4z"/></svg></button>
    <button aria-label="设置"><svg class="i s" viewBox="0 0 16 16"><circle class="b" cx="8" cy="8" r="4.500" stroke-width="2"/><path class="b" stroke-width="2" d="M8 1v2M8 13v2M1 8h2M13 8h2M3 3l1.500 1.500M11.500 11.500 13 13M13 3l-1.500 1.500M4.500 11.500 3 13"/></svg></button>
    <svg class="size s" viewBox="0 0 14 14"><path d="M1 13 13 1M5 13l8-8M9 13l4-4" stroke="#ccc" stroke-width="1.500"/></svg>
  </div>
</footer>

<div class="watermark">
  <svg class="swirl" viewBox="0 0 44 44"><path fill="#2585c5" fill-opacity=".85" d="M38 2Q8 6 2 22q-3 9 8 9Q2 22 20 12q10-5 18-10z"/><path fill="#2585c5" fill-opacity=".5" d="M12 22q8-8 24-12Q20 18 18 27q-4 2-6-5z"/><path fill="#48a23f" fill-opacity=".85" d="M32 14q12 6 2 17Q24 41 6 41q18-4 24-14 3-7-10-2 3-8 12-11z"/><path fill="#d2b84b" fill-opacity=".7" d="M4 39q17-2 24-12-1 12-24 12z"/></svg>
  <div class="site"><span>极光下载站</span><span>www.xz7.com</span></div>
  <div class="act"><span>激活 Windows</span><span>转到“设置”以激活 Windows。</span></div>
</div>
</div>
</body>
</html>
```
FILE: styles.css
```css
* { box-sizing: border-box; }
html, body { margin: 0; height: 100%; }
body {
  font: 12px/16px "Noto Sans", "Noto Sans CJK SC", sans-serif;
  color: #fff;
  background: #323842;
  overflow: hidden;
}
h1, h2, h3, p, ul { margin: 0; padding: 0; font-size: 12px; font-weight: 400; }
ul { list-style: none; }
button, select, input { font: inherit; color: inherit; background: none; border: 0; padding: 0; margin: 0; }
button { display: flex; align-items: center; justify-content: center; white-space: nowrap; }
select { appearance: none; outline: 0; }
.mono { font-family: "Liberation Mono", monospace; font-size: 10px; }

.app { position: relative; height: 100vh; display: flex; flex-direction: column; overflow: hidden; }

/* icons */
.i { width: 16px; height: 16px; flex: none; fill: none; stroke: #fff; shape-rendering: crispEdges; }
.s, .i .s { shape-rendering: auto; }
.k { stroke: #000; }
.i .b { stroke: #5bb8ff; }
.i .o { stroke: #f5b942; }
.i .F { fill: #fff; stroke: none; }
.i .B { fill: #5bb8ff; stroke: none; }
.i .O { fill: #ffc33a; stroke: none; }
.i .G { fill: #7cc57f; stroke: none; }
.i .L { fill: #b4d8fb; stroke: none; }
.i .D { fill: #5f93c6; stroke: none; }
.i .A { fill: #a9d6fa; stroke: none; }
.q { font: 700 11px "Noto Sans", sans-serif; fill: #fff; stroke: none; text-anchor: middle; }
.dwg { font: 700 7px "Liberation Sans", sans-serif; fill: #fff; stroke: none; text-anchor: middle; }
.c { stroke: #7b828c; shape-rendering: auto; }
.tri { width: 0; height: 0; flex: none; border: 4px solid transparent; border-top: 5px solid #fff; border-bottom: 0; }
.tri.big { border-width: 5px 5px 0; }
.up { border: 4px solid transparent; border-bottom: 5px solid #fff; border-top: 0; }

.titlebar { flex: none; height: 31px; display: flex; align-items: center; background: #fff; color: #000; border-top: 1px solid #4a4d52; padding: 0 2px 0 9px; }
.titlebar h1 { flex: 1; font-family: "Open Sans", "Noto Sans CJK SC", sans-serif; font-size: 13px; }
.titlebar h1 span { font-size: 12px; }
.titlebar button { width: 45px; height: 30px; }
.logo { width: 16px; height: 16px; margin-right: 5px; }

.menubar { flex: none; height: 21px; display: flex; gap: 15px; padding: 0 8px; background: #2f3740; border-bottom: 1px solid #f4f5f8; }

/* toolbars */
.toolrow { flex: none; display: flex; height: 26px; }
.bar { display: flex; align-items: flex-start; padding: 0 2px 0 2px; background: #434a56; border-top: 1px solid #a3afc7; }
.bar.second { padding: 0 3px 0 4px; }
.grip { flex: none; width: 5px; height: 21px; margin: 1px 1px 0; border: solid #93a0b8; border-width: 0 2px; }
.sep { flex: none; width: 4px; height: 19px; margin: 2px 3px 0 2px; border: solid #93a0b8; border-width: 0 1px; }
.t { width: 24px; height: 24px; flex: none; }
.undo { display: flex; align-items: center; width: 60px; height: 23px; background: #22262f; }
.undo .t { width: 20px; }
.undo .tri { margin: 0 1px; }
.combo { position: relative; display: flex; align-items: center; height: 22px; background: #22262f; border-bottom: 1px solid #767c86; padding-right: 4px; }
.combo::after { content: ""; flex: none; border: 5px solid transparent; border-top-color: #fff; border-bottom: 0; }
.combo select { flex: 1; min-width: 0; }
.styl { width: 100px; padding-left: 2px; }
.lower .combo { height: 22px; margin-top: 1px; }
.layer { width: 298px; padding-left: 2px; margin-left: 1px; gap: 2px; }
.layer .swatch { margin: 0 3px 0 2px; }
.swatch { flex: none; width: 12px; height: 12px; background: #000; }
.swatch.small { width: 10px; height: 10px; }
.color { width: 155px; padding-left: 7px; gap: 3px; }
.ltype { width: 170px; padding-left: 7px; gap: 3px; }
.lweight { width: 123px; padding-left: 6px; gap: 4px; }
.pstyle { width: 117px; padding-left: 5px; color: #8d929b; }
.pstyle::after { border-top-color: #b8bcc3; }
.pstyle select { opacity: 1; color: #8d929b; }
.line { flex: none; height: 1px; background: #fff; }
.line.long { width: 62px; }
.line.short { width: 37px; }
.line.mid { width: 45px; }
.line.small { width: 40px; }
.line.none { width: 62px; background: none; }
.droplist { position: absolute; z-index: 10; left: 0; top: 22px; width: 170px; border: 1px solid #0078d7; background: #22262f; box-shadow: 3px 3px 3px rgba(0, 0, 0, .4); }
.droplist li { display: flex; align-items: center; gap: 3px; height: 16px; padding: 1px 0 0 4px; }
.droplist .mono { margin-left: -3px; }
.droplist .on { background: #535e69; }
.tooltip { position: absolute; z-index: 9; left: 170px; top: 29px; height: 20px; padding: 1px 6px 0 1px; background: #fff; border: 1px solid #999; border-left: 0; color: #575757; white-space: nowrap; box-shadow: 3px 3px 3px rgba(0, 0, 0, .4); }

/* workspace */
.work { flex: 1; min-height: 0; display: flex; padding: 3px 4px 0 1px; }
.left { flex: 1; min-width: 0; display: flex; flex-direction: column; gap: 4px; margin-right: 6px; }
.drawrow { flex: 1; min-height: 0; display: flex; gap: 2px; }
.palette { flex: none; align-self: flex-start; width: 28px; margin-top: 1px; padding-bottom: 2px; border-left: 1px solid #9ba6b8; background: #434a56; }
.palette.right { width: 27px; }
.palette button { width: 25px; height: 23px; }
.palette.right button { width: 24px; }
.hgrip { display: block; height: 6px; margin: 1px 1px 0 0; border: solid #93a0b8; border-width: 2px 0; }
.hgrip.inner { margin: 5px 1px 1px 0; }
.doc { flex: 1; min-width: 0; display: flex; flex-direction: column; background: #2a2d32; }
.filetabs { display: flex; height: 24px; gap: 1px; }
.more { width: 11px; background: #434a56; }
.ftab { display: flex; align-items: center; width: 174px; padding: 0 2px; background: #53657f; }
.fname { flex: 1; padding-left: 1px; font: 700 12px/16px "Liberation Mono", monospace; }
.newtab { width: 29px; background: #434a56; }
.canvas { flex: 1; position: relative; background: #0ff; }
.ucs { position: absolute; left: 0; bottom: 0; width: 160px; height: 160px; fill: none; stroke: #000; shape-rendering: crispEdges; }
.ucs text { font: 300 26px Lato, sans-serif; fill: #000; stroke: none; text-anchor: middle; }
.pointer { position: absolute; z-index: 20; left: 571px; top: 31px; width: 80px; height: 130px; fill: none; }
.caret { position: absolute; left: 667px; top: 37px; width: 1px; height: 17px; background: #fff; }
.sheets { display: flex; gap: 2px; height: 15px; padding-left: 1px; }
.sheets button { width: 14px; height: 14px; line-height: 12px; padding-bottom: 2px; background: #434a56; color: #d5dae2; }
.n { width: 14px; height: 14px; stroke: none; fill: #9aa0ab; }
.n path:first-child:not(:last-child) { stroke: #9aa0ab; stroke-width: 1px; }
.sheets .sheet { width: 51px; font-size: 11px; }
.sheets .on { width: 47px; font-weight: 700; background: #53657f; color: #fff; }
.sheets .add { width: 30px; }

.command { display: flex; height: 149px; background: #2b2d31; }
.cside { width: 21px; margin: 1px; padding: 0 3px; background: #414856; }
.cmain { flex: 1; min-width: 0; margin-left: -1px; border-left: 1px solid #4d5561; color: #b9bdc4; font: 300 16px/18px "Noto Sans CJK SC", sans-serif; }
.cmain i { font: 13px/16px "Liberation Mono", monospace; }
.log { display: flex; height: 127px; border-bottom: 1px solid #59626c; }
.lines { flex: 1; margin-top: -1px; }
.lines p { font-size: 16px; font-weight: 300; line-height: 18px; height: 18px; white-space: nowrap; }
.prompt { display: flex; align-items: center; height: 19px; }
.prompt input { flex: 1; outline: 0; }
.cur { width: 1px; height: 18px; margin-left: 10px; background: #ddd; }

.scroll { flex: none; display: flex; flex-direction: column; align-items: center; width: 15px; padding: 1px 0; background: #3a3d43; }
.thumb { width: 13px; background: #535d67; }
.scroll .i { margin-top: 1px; }
.scroll .i:last-child { margin-top: auto; }
.thumb.low { height: 54px; margin-top: 37px; }
.thumb.tr { height: 68px; width: 15px; }
.thumb.main { height: 105px; }

/* panels */
.panel { flex: none; display: flex; flex-direction: column; border: 1px solid #2a2e35; background: #434c57; margin-bottom: 1px; }
.panel header { display: flex; flex: none; height: 23px; background: #535e69; }
.panel h2 { flex: 1; font-size: 15px; font-weight: 700; line-height: 20px; }
.panel header button { width: 20px; height: 20px; margin-right: 3px; }
.calc { width: 278px; margin-right: 4px; }
.calc h2 { padding-left: 17px; }
.cbody { flex: 1; min-height: 0; display: flex; padding-right: 4px; }
.cbody > .scroll { margin-top: 29px; }
.cscroll { flex: 1; min-width: 0; overflow: hidden; padding: 9px 4px 0 10px; }
.ctools { display: flex; gap: 6px; padding-left: 5px; }
.ctools button { width: 20px; height: 20px; border: 1px solid #9a9da1; }
.box { display: block; width: 100%; border: 1px solid #676b70; outline: 0; }
.history { height: 80px; margin-top: 15px; }
.entry { height: 20px; margin-top: 5px; }
.calc h3 { display: flex; align-items: center; height: 20px; margin-top: 10px; padding-left: 2px; font-size: 15px; font-weight: 700; }
.calc h3.gap { margin-top: 17px; }
.calc h3.units { margin-top: 30px; }
.calc h3 span { font: 14px/20px "Liberation Mono", monospace; }
.keys { display: grid; grid-template-columns: repeat(5, 36px); gap: 7px 10px; padding-left: 10px; }
.keys button { height: 20px; border: 1px solid #9a9da1; }
.vtools { display: flex; gap: 5px; padding-left: 10px; }
.vtools button { position: relative; width: 20px; height: 20px; }
.vtools .framed { border: 1px solid #9a9da1; }
.vtools .i { position: absolute; left: 2px; top: 1px; }
.var { width: 16px; text-align: center; font: italic 400 18px/18px "Liberation Serif", serif; color: #5bb8ff; }
.var.con { font-style: normal; font-weight: 700; font-size: 16px; }
.var.off { color: #9a9da1; }
.tree { display: flex; height: 140px; overflow: hidden; border: 1px solid #676b70; }
.tree ul { flex: 1; }
.tree li { display: flex; align-items: center; gap: 5px; height: 20px; padding-left: 41px; }
.tree li:not(.root) { background: linear-gradient(#5a6470, #5a6470) 31px 10px / 9px 1px no-repeat, linear-gradient(#5a6470, #5a6470) 30px 0 / 1px 20px no-repeat; }
.tree .root { padding-left: 7px; }
.minus { width: 9px; height: 9px; margin-right: 1px; fill: none; }
.detail { height: 20px; padding-left: 2px; line-height: 18px; }
.dbox { width: auto; height: 80px; margin: 0 2px; }
.urow { display: flex; height: 20px; line-height: 20px; padding: 1px 0 0 26px; }
.urow span:first-child { width: 80px; border-right: 1px solid #5c646e; margin-right: 5px; }

.props { width: 224px; color: #e6e9ee; }
.props h2 { padding-left: 10px; color: #fff; }
.picker { display: flex; flex: none; gap: 3px; height: 34px; padding: 7px 0 0 8px; }
.picker button { width: 21px; height: 21px; border: 1px solid #535e69; }
.sel { display: flex; align-items: center; width: 133px; height: 27px; padding: 0 3px 0 4px; border-bottom: 1px solid #535e69; margin-right: 1px; }
.sel select { flex: 1; }
.props h3 { display: flex; align-items: flex-end; justify-content: space-between; height: 49px; line-height: 18px; margin: 0 32px 0 8px; padding: 0 6px 0 4px; font-weight: 700; border-bottom: 1px solid #e6e9ee; }
.props h3.first { height: 47px; }
.props h3 .tri { margin-bottom: 4px; }
.props table { width: 182px; margin-left: 8px; border-collapse: collapse; table-layout: fixed; }
.props th, .props td { height: 25px; padding: 0 0 0 4px; font-weight: 400; text-align: left; white-space: nowrap; border-bottom: 1px solid #535e69; }
.props th { width: 68px; padding-top: 3px; border-right: 1px solid #535e69; }
.props .on th { background: #1c68a8; }
.props .dim td { color: #9298a0; }
.props td { padding: 0 0 0 3px; }
.cell { display: flex; align-items: center; gap: 3px; }
.cell .tri { margin-left: auto; margin-right: 4px; }

.status { flex: none; display: flex; height: 28px; align-items: center; background: #323842; padding-left: 11px; }
.coords { width: 250px; height: 20px; line-height: 22px; border-bottom: 1px solid #535a64; }
.modes { display: flex; gap: 4px; flex: 1; padding-left: 3px; }
.modes button { width: 20px; height: 20px; }
.modes .on { background: #4f6c8c; outline: 1px solid #5bb8ff; outline-offset: -1px; }
.rstat { display: flex; align-items: center; gap: 6px; color: #8d929b; }
.rstat button { gap: 2px; }
.rstat .ann { margin-left: 3px; }
.size { width: 14px; height: 14px; align-self: flex-end; margin-left: 46px; fill: none; }

.watermark { position: absolute; right: 0; bottom: 0; width: 161px; height: 56px; overflow: hidden; pointer-events: none; white-space: nowrap; }
.swirl { position: absolute; left: 0; top: 6px; width: 44px; height: 44px; }
.site, .act { position: absolute; display: flex; flex-direction: column; }
.site { left: 45px; top: 2px; font-weight: 700; }
.site span:first-child { font-size: 21px; line-height: 28px; color: rgba(30, 105, 195, .65); }
.site span:last-child { font-size: 16px; line-height: 20px; color: rgba(30, 140, 70, .7); }
.act { left: 37px; top: 0; color: rgba(190, 194, 200, .65); }
.act span:first-child { font-size: 20px; line-height: 28px; }
.act span:last-child { font-size: 15px; line-height: 18px; }
```
